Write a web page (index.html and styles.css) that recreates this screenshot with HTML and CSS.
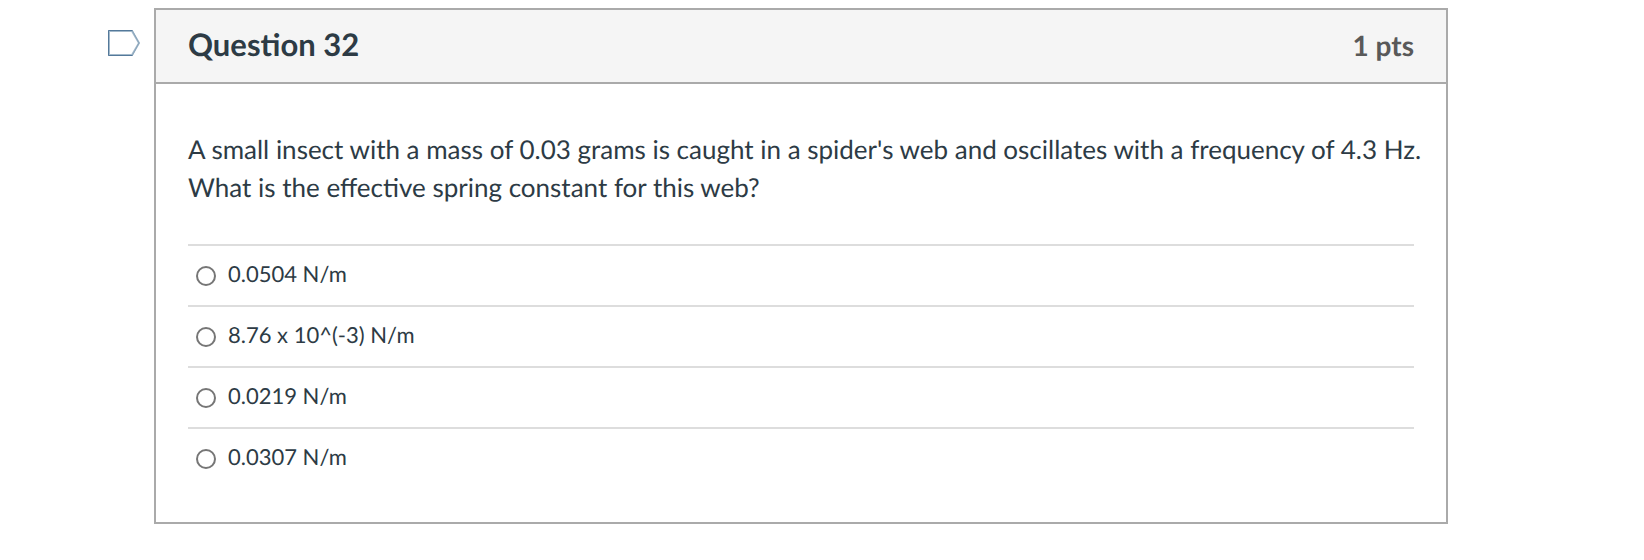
FILE: index.html
```html
<!DOCTYPE html>
<html lang="en">
<head>
<meta charset="utf-8">
<title>Question 32</title>
<link rel="stylesheet" href="styles.css">
</head>
<body>
<main class="quiz">
  <button class="flag" type="button" aria-label="Flag question 32">
    <svg class="flag-icon" viewBox="0 0 32 26" aria-hidden="true"><path d="M1 1H24L31 13L24 25H1Z" fill="none" stroke="#a3b9cb" stroke-width="2"/><path d="M24.500 .5H.5V25.500H24.500" fill="none" stroke="#54799a"/><path d="M24.500 1L31 13L24.500 25" fill="none" stroke="#8aa5bb"/></svg>
  </button>
  <section class="question">
    <header class="question-header">
      <h1 class="question-name">Question 32</h1>
      <span class="question-points">1 pts</span>
    </header>
    <form class="question-body">
      <p class="question-text" id="question-text">A small insect with a mass of 0.03 grams is caught in a spider's web and oscillates with a frequency of 4.3 Hz. What is the effective spring constant for this web?</p>
      <div class="answers" role="radiogroup" aria-labelledby="question-text">
        <label class="answer"><input class="answer-radio" type="radio" name="answer" value="1"><span class="answer-label">0.0504 N/m</span></label>
        <label class="answer"><input class="answer-radio" type="radio" name="answer" value="2"><span class="answer-label">8.76 x 10^(-3) N/m</span></label>
        <label class="answer"><input class="answer-radio" type="radio" name="answer" value="3"><span class="answer-label">0.0219 N/m</span></label>
        <label class="answer"><input class="answer-radio" type="radio" name="answer" value="4"><span class="answer-label">0.0307 N/m</span></label>
      </div>
    </form>
  </section>
</main>
</body>
</html>
```
FILE: styles.css
```css
* {
  box-sizing: border-box;
}

body {
  margin: 0;
  background: #fff;
  color: #2d3b45;
  font-family: Lato, "Liberation Sans", sans-serif;
  text-rendering: geometricPrecision;
}

.quiz {
  display: flex;
  align-items: flex-start;
  gap: 14px;
  padding: 8px 196px 36px 108px;
}

.flag {
  flex: none;
  margin: 22px 0 0;
  padding: 0;
  border: 0;
  background: none;
}

.flag-icon {
  display: block;
  width: 32px;
  height: 26px;
}

.question {
  flex: 1;
  min-width: 0;
  border: 2px solid #aaa;
}

.question-header {
  display: flex;
  align-items: baseline;
  justify-content: space-between;
  padding: 14px 32px 17px;
  border-bottom: 2px solid #aaa;
  background: #f5f5f5;
}

.question-name {
  margin: 0;
  font-size: 31px;
  line-height: 40px;
}

.question-points {
  color: #595959;
  font-size: 28px;
  font-weight: 700;
  line-height: 40px;
}

.question-body {
  padding: 46px 32px 34px;
}

.question-text {
  margin: 0 -8px 38px 0;
  font-size: 26px;
  line-height: 38px;
}

.answer {
  display: flex;
  align-items: center;
  gap: 12px;
  padding: 11px 8px 14px;
  border-top: 2px solid #ddd;
}

.answer-radio {
  appearance: none;
  width: 20px;
  height: 20px;
  margin: 4px 0 0;
  border: 2px solid #767676;
  border-radius: 50%;
  background: #fff;
}

.answer-radio:checked {
  background: #767676;
  box-shadow: inset 0 0 0 3px #fff;
}

.answer-label {
  font-size: 22px;
  line-height: 34px;
}
```
